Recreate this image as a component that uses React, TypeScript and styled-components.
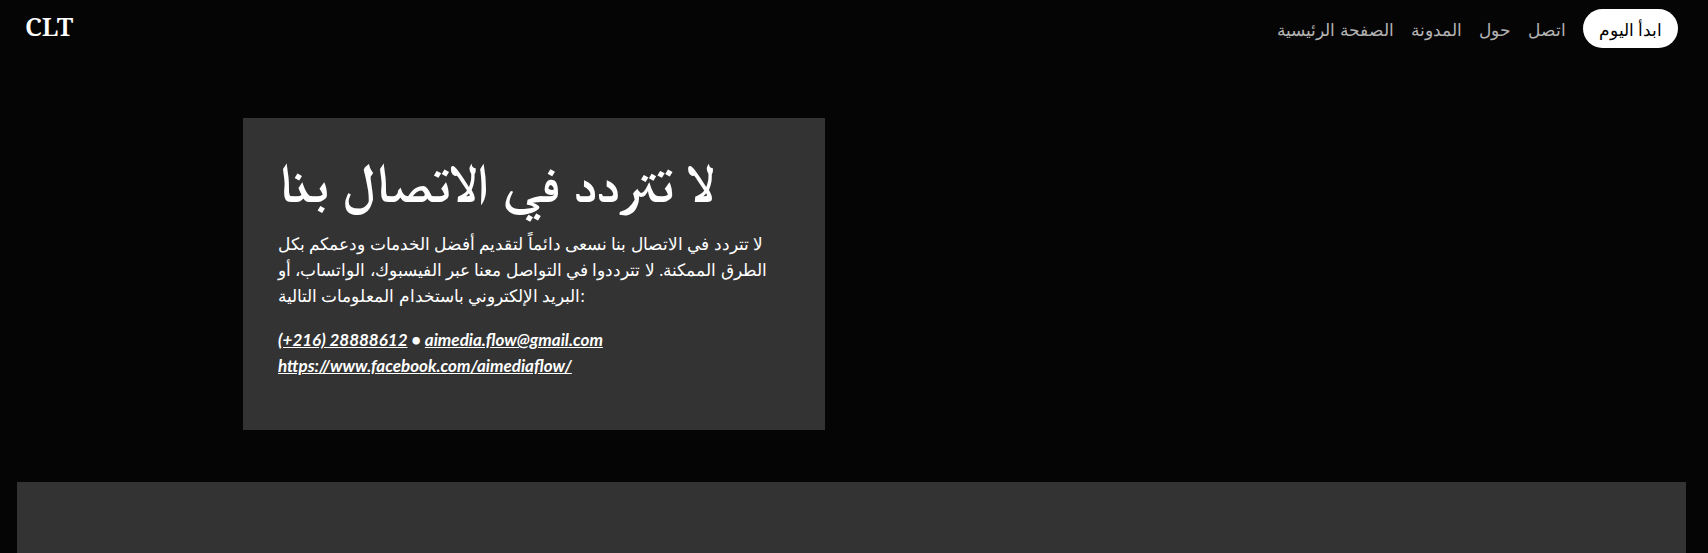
import React from 'react';
import styled, { createGlobalStyle } from 'styled-components';

const GlobalStyle = createGlobalStyle`
  * { box-sizing: border-box; }
  body {
    margin: 0;
    background: #050505;
    color: #fff;
    font-family: Lato, sans-serif;
    font-size: 17px;
    line-height: 26px;
  }
`;

const Page = styled.div`
  padding-right: 5px;
  overflow: hidden;
`;

const Header = styled.header`
  display: flex;
  align-items: flex-start;
  justify-content: space-between;
  padding: 9px 25px;
`;

const Brand = styled.a`
  color: #fff;
  font: 600 26px/34px 'Noto Serif', serif;
  text-decoration: none;
`;

const Nav = styled.nav`
  display: flex;
  align-items: center;
  gap: 17px;
`;

const NavLink = styled.a`
  padding-top: 2px;
  color: #b3b3b3;
  text-decoration: none;
`;

const StartButton = styled.button`
  height: 39px;
  padding: 2px 16px 0;
  border: 0;
  border-radius: 20px;
  background: #fff;
  color: #000;
  font: inherit;
`;

const Contact = styled.section`
  max-width: 1217px;
  margin: 0 auto;
  padding: 61px 0 52px;
`;

const Card = styled.div`
  width: 582px;
  max-width: 100%;
  padding: 34px 35px 33px;
  background: #333;
`;

const Title = styled.h1`
  margin: 0 0 11px;
  font: 700 55px/68px FreeSerif, 'Noto Naskh Arabic', serif;
`;

const Text = styled.p`
  margin: 0 0 18px;
`;

const Details = styled(Text)`
  font-style: italic;
  font-weight: bold;
`;

const DetailLink = styled.a`
  color: #fff;
  text-decoration: underline;
`;

const Panel = styled.section`
  min-height: 71px;
  margin: 0 17px;
  background: #333;
`;

const links = ['الصفحة الرئيسية', 'المدونة', 'حول', 'اتصل'];

export default function App() {
  return (
    <Page>
      <GlobalStyle />
      <Header>
        <Brand href="#">CLT</Brand>
        <Nav>
          {links.map((label) => (
            <NavLink key={label} href="#">{label}</NavLink>
          ))}
          <StartButton type="button">ابدأ اليوم</StartButton>
        </Nav>
      </Header>
      <main>
        <Contact>
          <Card>
            <Title>لا تتردد في الاتصال بنا</Title>
            <Text>
              لا تتردد في الاتصال بنا نسعى دائماً لتقديم أفضل الخدمات ودعمكم بكل الطرق
              الممكنة. لا تترددوا في التواصل معنا عبر الفيسبوك، الواتساب، أو البريد
              الإلكتروني باستخدام المعلومات التالية:
            </Text>
            <Details>
              <DetailLink href="tel:+21628888612">(+216) 28888612</DetailLink>
              {' • '}
              <DetailLink href="mailto:aimedia.flow@gmail.com">aimedia.flow@gmail.com</DetailLink>
              <br />
              <DetailLink href="https://www.facebook.com/aimediaflow/">
                https://www.facebook.com/aimediaflow/
              </DetailLink>
            </Details>
          </Card>
        </Contact>
        <Panel />
      </main>
    </Page>
  );
}
